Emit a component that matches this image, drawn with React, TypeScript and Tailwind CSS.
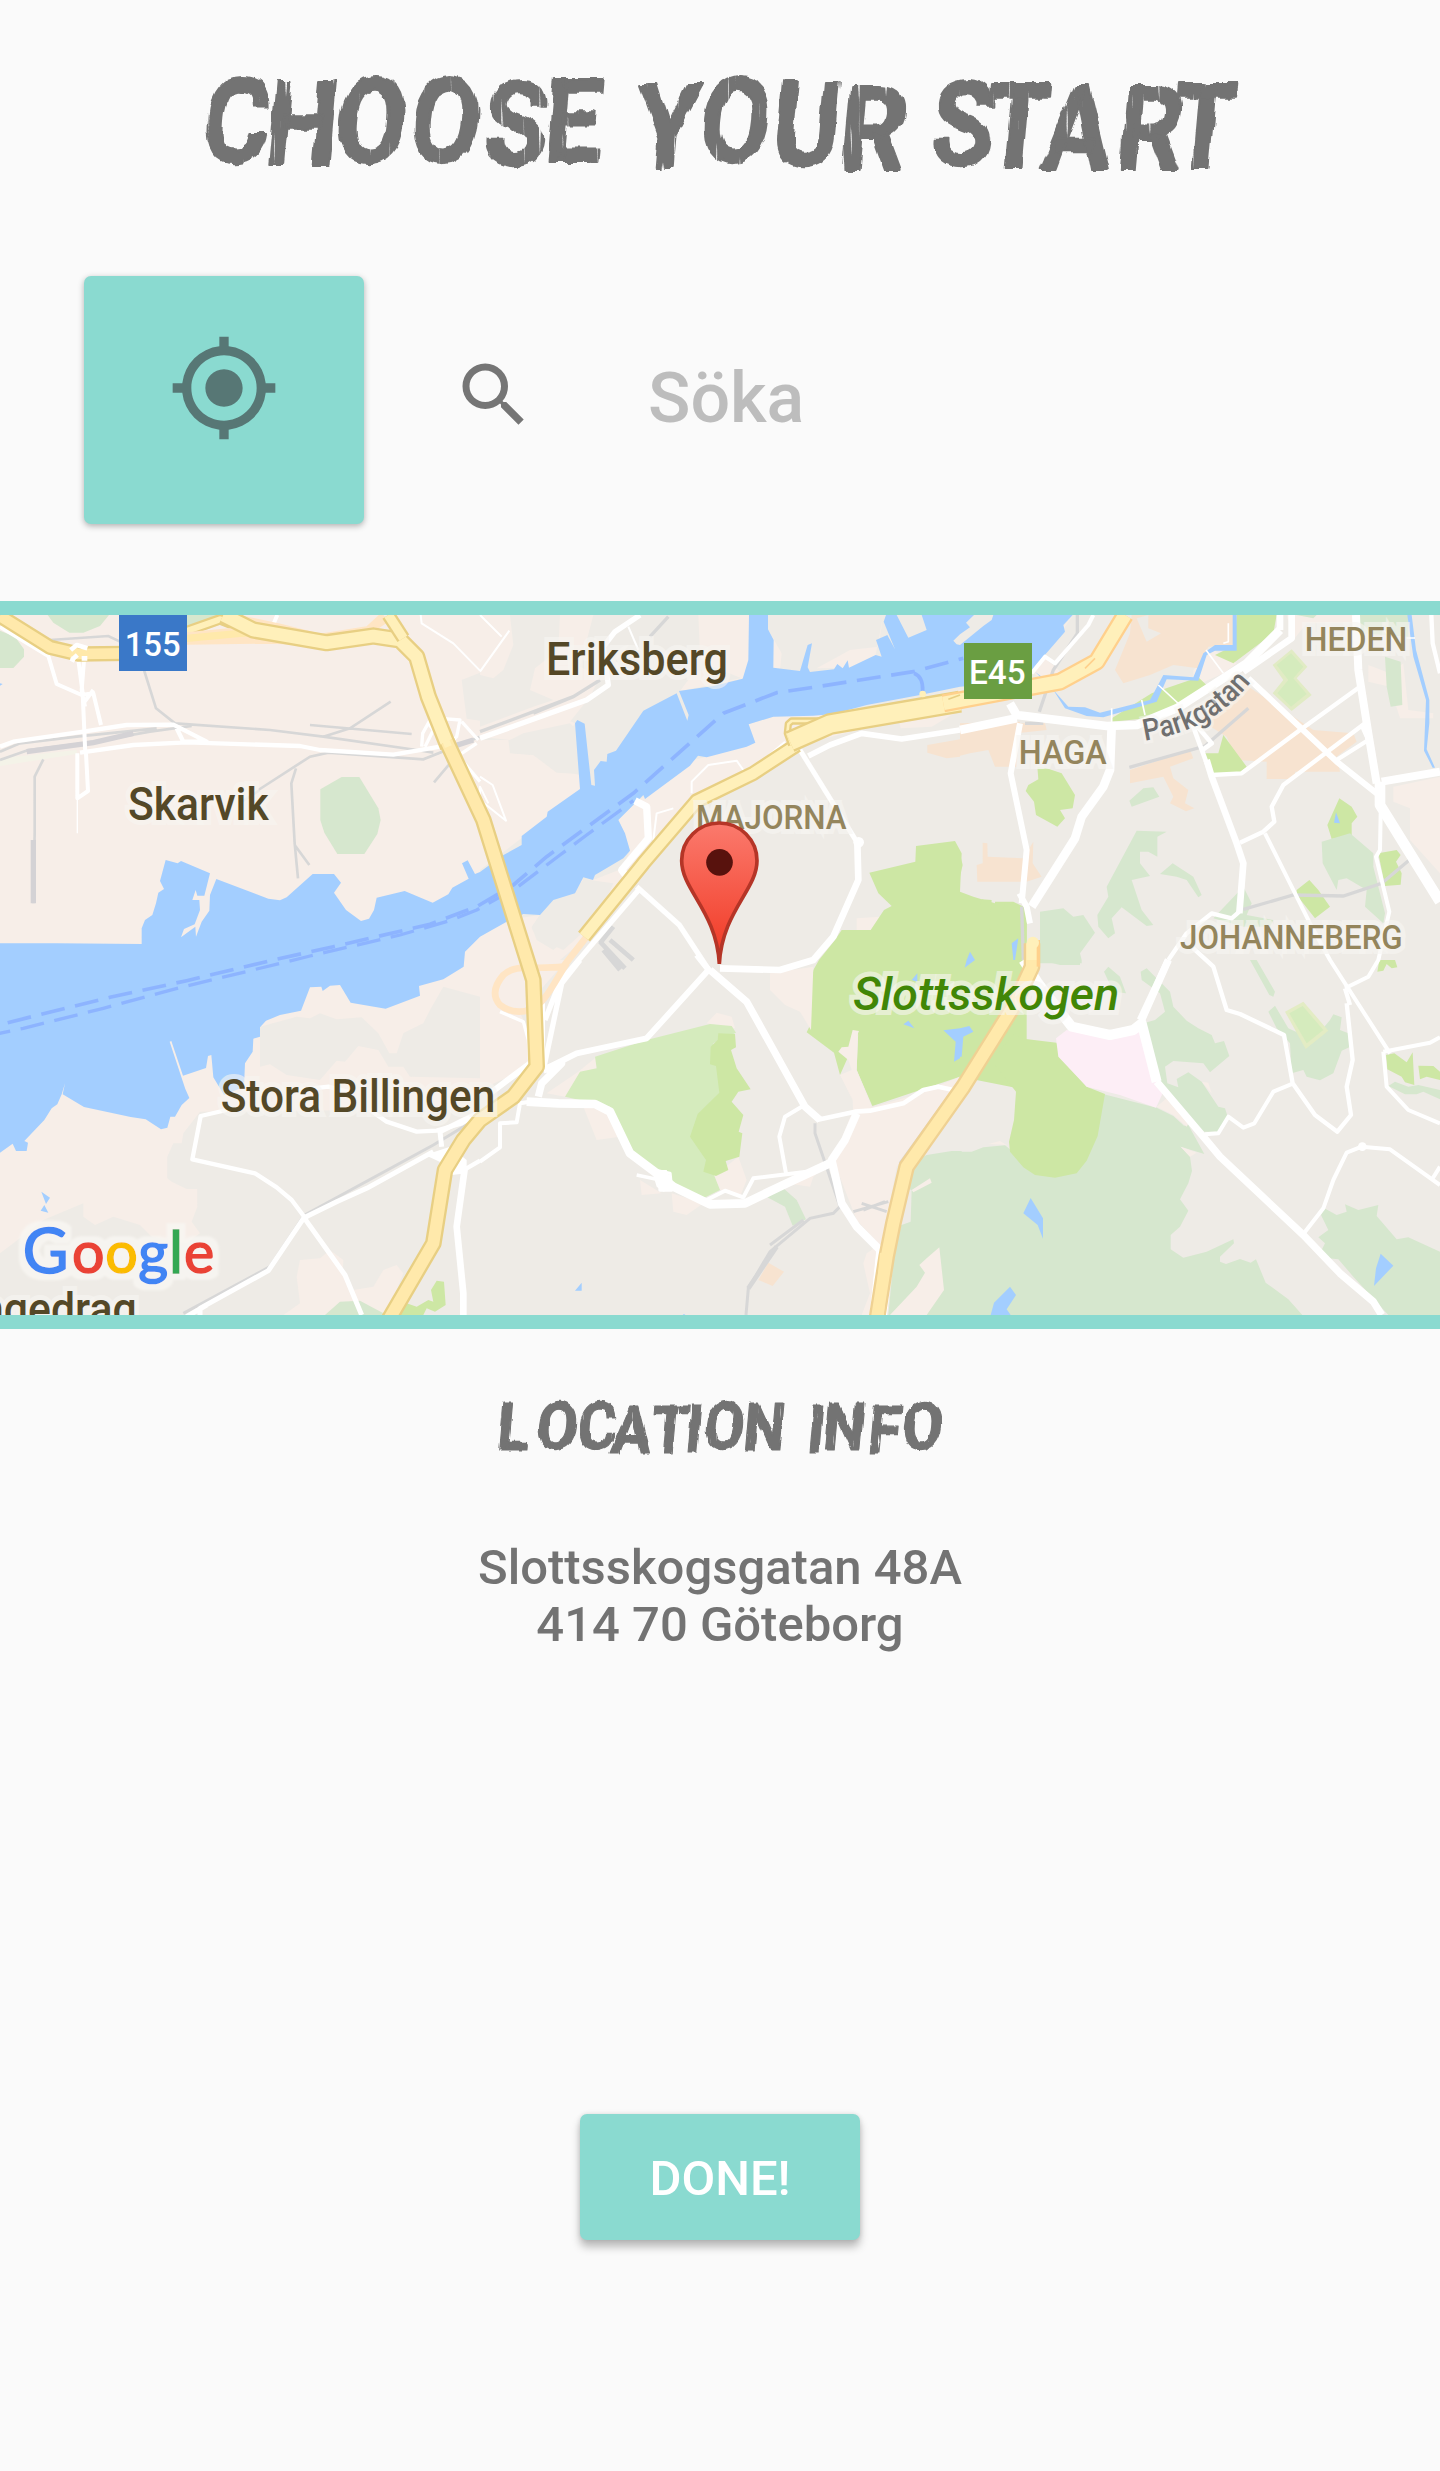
import type { ReactNode } from "react";

const GREY = "#737373";

/* ---------- Brush headings ---------- */

type BrushProps = {
  text: string;
  xs: number[];
  ys: number[];
  width: number;
  height: number;
  baseline: number;
  size: number;
  squeeze: number;
  filter: string;
};

function BrushText({ text, xs, ys, width, height, baseline, size, squeeze, filter }: BrushProps) {
  return (
    <svg width={width} height={height} viewBox={`0 0 ${width} ${height}`} className="block overflow-visible">
      <g filter={`url(#${filter})`}>
        <g transform={`translate(0 ${baseline}) skewX(-5) scale(${squeeze} 1)`}>
          <text
            x={xs.map((x) => (x / squeeze).toFixed(1)).join(" ")}
            y={ys.join(" ")}
            fontSize={size}
            fontWeight={700}
            fill={GREY}
            stroke={GREY}
            strokeWidth={size * 0.018}
            strokeLinejoin="round"
            className="font-['Roboto',sans-serif]"
          >
            {text}
          </text>
        </g>
      </g>
    </svg>
  );
}

function BrushFilters() {
  return (
    <svg width="0" height="0" className="absolute">
      <defs>
        <filter id="brush-lg" x="-5%" y="-20%" width="110%" height="140%">
          <feTurbulence type="fractalNoise" baseFrequency="0.09 0.03" numOctaves="2" seed="4" result="n" />
          <feDisplacementMap in="SourceGraphic" in2="n" scale="8" xChannelSelector="G" yChannelSelector="R" result="d" />
          <feTurbulence type="fractalNoise" baseFrequency="0.26 0.02" numOctaves="1" seed="9" result="s" />
          <feColorMatrix in="s" type="matrix" values="0 0 0 0 0  0 0 0 0 0  0 0 0 0 0  14 0 0 0 -9.7" result="cut" />
          <feComposite in="d" in2="cut" operator="out" />
        </filter>
        <filter id="brush-sm" x="-5%" y="-20%" width="110%" height="140%">
          <feTurbulence type="fractalNoise" baseFrequency="0.16 0.05" numOctaves="2" seed="6" result="n" />
          <feDisplacementMap in="SourceGraphic" in2="n" scale="4.500" xChannelSelector="G" yChannelSelector="R" result="d" />
          <feTurbulence type="fractalNoise" baseFrequency="0.45 0.04" numOctaves="1" seed="3" result="s" />
          <feColorMatrix in="s" type="matrix" values="0 0 0 0 0  0 0 0 0 0  0 0 0 0 0  12 0 0 0 -8.6" result="cut" />
          <feComposite in="d" in2="cut" operator="out" />
        </filter>
      </defs>
    </svg>
  );
}

/* ---------- Map ---------- */

const LAND = "#eeebe6";
const PEACH = "#f7eee8";
const WATER = "#a3ceff";
const PARK = "#cde7a4";
const PARK2 = "#d5ebbd";
const WOOD = "#d6e7ce";
const SAND = "#f7e3d0";
const RAIL = "#d7d7d7";
const CASE = "#e8cf83";

const A = ({ d, c }: { d: string; c: string }) => <path d={d} fill={c} />;
const R = ({ d, w, c = "#fff" }: { d: string; w: number; c?: string }) => (
  <path d={d} fill="none" stroke={c} strokeWidth={w} strokeLinejoin="round" />
);
const Hwy = ({ d, w, c = "#ffe9ab", k = CASE }: { d: string; w: number; c?: string; k?: string }) => (
  <>
    <R d={d} w={w} c={k} />
    <R d={d} w={w - 14} c={c} />
  </>
);
const Tile = ({ x, y, children }: { x: number; y: number; children: ReactNode }) => (
  <g transform={`translate(${x} ${y})`}>{children}</g>
);

type LabelProps = { x: number; y: number; w: number; s: number; c: string; t: string; italic?: boolean };
function Label({ x, y, w, s, c, t, italic }: LabelProps) {
  return (
    <text
      x={x}
      y={y}
      textLength={w}
      lengthAdjust="spacingAndGlyphs"
      fontSize={s}
      fontWeight={500}
      fontStyle={italic ? "italic" : undefined}
      fill={c}
      stroke="#f8f6f2"
      strokeOpacity={0.6}
      strokeWidth={30}
      paintOrder="stroke"
      className="font-['Roboto',sans-serif]"
    >
      {t}
    </text>
  );
}

function Areas() {
  return (
    <>
      {/* west side */}
      <A c={PEACH} d="M0 75H1440V1220L1330 1190 1290 1260 1270 1300 1210 1330 1190 1390 1168 1390 1135 1330 1085 1282 1010 1288 960 1270 930 1285 890 1280 780 1310 780 1430 810 1423 860 1455 960 1470 1010 1412 1035 1415 1075 1368 1135 1380 1165 1430 1210 1430 1230 1460 1440 1465V1560L1300 1560 1100 1560 600 1565 550 1630 545 1660 520 1660 502 1700 502 1765 515 1775 560 1797H592V1850L575 1895 600 1930 560 1960 455 1940 420 1905 340 1880 285 1905 250 1880V1840L130 1890 40 1960 0 1990Z" />
      <Tile x={0} y={0}>
        <A c={WOOD} d="M143 75H327L300 108 250 128H208L160 98Z M0 122L45 140 72 178V200L40 234H0Z M560 75H690L640 105 560 130Z" />
        <A c={WOOD} d="M1025 561H1078L1135 655 1142 690 1132 732 1093 792H1012L973 728 961 690V598Z" />
        <A c="#f4f3e8" d="M0 505L230 480V492L0 528Z" />
        <A c={WATER} d="M0 280L8 282 0 287Z" />
        <A c={LAND} d="M1385 270L1440 248V392L1400 386 1390 310Z" />
      </Tile>
      <Tile x={1440} y={0}>
        <A c={PEACH} d="M0 75L90 75 100 165 70 240 40 265 0 255Z M240 75H340L300 230 360 260 330 320 250 420 120 440 90 450 0 440V410L160 350 220 330 150 300 165 235 235 180Z M655 75H807V260L700 280 660 190Z M600 303L788 266 700 230 640 250Z M0 450L85 450 90 490 160 495 230 540 300 555V600L130 740 0 840Z M285 400L245 460 180 400 240 380Z M864 118L905 190 900 240H880Z M1107 233L1187 195 1210 75 1195 170 1110 180 1010 235Z" />
        <A c={LAND} d="M90 450L130 430 270 400 290 420 300 552 230 548 160 495 100 490Z" />
        <A c={PEACH} d="M805 403L880 380 1060 372 1300 330 1440 300V340L940 470 790 560 640 640 530 740 420 870 310 1050 240 1110H0V1040L80 990 180 975 155 1010 170 1050 220 1080 360 960 300 870 345 868 430 835 450 780 415 685 490 620 640 510 680 500 826 458Z" />
        <A c={LAND} d="M180 975L225 930 290 910 310 867 345 872 400 880 350 990 250 1080 180 1050 155 1015Z" />
        <A c={PEACH} d="M1255 385L1440 360 1355 410 1262 415Z M1130 985L1200 980 1235 948 1170 1035 1130 1020Z" />
        <A c={SAND} d="M1342 465L1440 448V500L1400 505 1342 488Z" />
        <A c={PARK} d="M1168 848L1306 815 1308 768 1425 753 1445 790 1440 905 1480 920 1545 940V935L1600 935 1640 955V1500L1440 1460 1177 1548 1130 1440 1135 1320 1138 1325 1080 1455 1062 1388 980 1327 993 1300 985 1240 1000 1140 1017 1110 1065 1050 1085 1020H1172L1212 960 1235 948 1195 910Z" />
        <A c={PEACH} d="M1130 1440L1134 1330 1137 1323 1118 1320 1105 1370 1085 1372 1075 1385 1105 1410 1115 1440 1080 1455 1118 1530 1120 1580 1180 1560Z" />
        <A c={WATER} d="M1390 1321L1440 1315 1470 1308 1480 1325 1450 1342 1445 1402 1422 1415 1427 1355Z M1270 1303L1285 1292 1303 1315Z M1295 1170L1312 1150V1175Z" />
        <A c={PEACH} d="M870 1150L1000 1130 993 1320 960 1265 915 1245 870 1200Z" />
      </Tile>
      <Tile x={2880} y={0}>
        <A c={PEACH} d="M340 75L310 110 220 250 290 300 330 270 250 200Z M700 240L760 180 830 220 790 250 700 290Z M980 75H1180V100L1040 100 1000 150Z M1225 225L1290 250 1330 220 1345 360 1420 370V385L1320 385 1290 290 1225 275Z M1300 590L1440 560V850L1350 750V655L1300 635Z" />
        <A c={SAND} d="M515 75H820V165L745 170 715 235 640 225 570 255 490 280 465 240 510 130Z M0 400L180 395 170 530H105L85 480 30 490 0 497Z M850 280L1060 420 1180 430 1190 455 1130 500 1140 545 1005 545V567H920V515L830 510 800 440 720 390Z M510 540L690 480 700 505 630 530 640 565 685 600 675 640 703 655 678 664 630 640 640 620 610 560 510 580Z M68 758L82 760 83 800 190 805 220 755 218 820 245 860 200 875H52L50 825 68 820Z M165 400L255 400 260 420 170 430Z" />
        <A c={LAND} d="M530 85L565 75 565 115 603 130 560 155Z" />
        <A c={PARK} d="M830 75H950L940 130 820 220 765 195 825 165Z M575 310L715 262 745 290 660 340 560 385 455 395 455 385Z M735 490L775 490 790 435 860 530 840 548 750 550Z M232 530L260 535 305 550 345 615 338 655 300 660 315 685 292 710 228 675 222 635 197 603 205 585 235 568Z M1138 625L1175 650 1192 680 1175 700V735L1115 747 1102 705Z M1255 790L1310 780 1322 795 1308 815 1325 850 1322 884 1275 888Z M1048 870L1075 900 1110 950 1065 985 1010 915V900Z M0 790L8 825 0 860Z" />
        <A c="#e1ebc4" d="M995 178L1042 230 1010 265 1055 315 995 363 938 310 970 270 938 225Z" />
        <A c={PARK2} d="M993 190L1030 230 1000 265 1040 312 993 350 952 310 985 270 950 225Z" />
        <A c={WOOD} d="M1275 200L1322 215 1327 345 1292 350 1280 290Z M1010 75H1070L1060 85Z M1200 75H1345V140L1200 130Z M508 632L550 595 580 592 598 620 515 650Z M530 722L620 725 592 740V800L565 785 540 785V820L570 858 515 870 545 960 580 1005 560 1008 485 952 455 985 465 1030 445 1045 415 1010 412 975 445 920 440 890Z M600 852L638 820 700 860 725 915 715 922 680 870 650 860Z M1085 755L1120 745 1170 730 1240 790 1240 830 1275 970 1270 1000 1215 950 1220 900 1160 865 1135 870 1130 900 1088 820Z M240 965L310 955 340 980 370 975 405 1028 360 1090 365 1110V1120H240Z M850 890L875 940 860 975 940 990 930 1010 850 1010 760 985Z" />
        <A c={PARK} d="M0 915L15 915V965L55 975 65 928 95 930 88 1020 110 1010 135 938 185 950 200 1000V1110L170 1290 60 1430 0 1470Z" />
        <A c={WATER} d="M225 245L245 260 325 350 375 352 420 368 570 330 610 255 700 262 730 190 765 165 818 165V75H830V182H765L740 195 715 272 620 268 590 335 430 382 380 378 315 355 280 300Z M1342 75L1355 75 1368 180 1408 330V400L1400 478 1425 533H1418L1392 482 1398 330 1360 200Z M1128 667L1140 700 1122 698Z M155 1060L175 1045 165 1110H160Z M20 1110L30 1085 45 1110 14 1133Z" />
      </Tile>
      <Tile x={0} y={1110}>
        <A c={WATER} d="M124 695L150 713 138 732Z M133 735L145 758 122 752Z" />
        <A c={PEACH} d="M990 870L1030 900 1028 940 1060 990 1120 980 1150 930 1190 915 1210 940 1160 1065H850L900 1030 890 950 900 900 960 895Z" />
        <A c={WOOD} d="M975 1065L1020 1025 1080 1022 1160 1065Z" />
        <A c={PARK} d="M1190 1065L1220 1030 1250 1040 1285 1020 1300 1025 1293 990 1310 962 1332 965 1337 1035 1305 1055 1280 1045 1270 1065Z" />
      </Tile>
      <Tile x={1440} y={1110}>
        <A c={PEACH} d="M0 0H260L120 160 200 310 150 320 20 380 0 380Z M295 335L350 290 350 325 255 410 200 400Z M310 440L380 450 420 530 350 540Z M680 190L710 158 755 170 765 205Z M480 660L545 700 485 705Z M575 700L670 730 620 765 580 755Z M700 650L775 590 800 660 780 710 720 690Z M920 670L1060 600 1000 650 990 680Z M1115 460L1320 400 1440 350V380L1250 620 1205 860 1130 780 1060 600Z M1160 880L1190 860V1065H1145L1170 1000 1150 910Z" />
        <A c={PARK2} d="M345 290L500 240 690 192 755 198 768 218 700 250 730 420 740 600 700 640 720 690 670 715 580 670 440 560 390 440 255 410 300 335 350 325Z" />
        <A c={PARK} d="M715 220L765 222 768 262 753 270 770 325 812 388 775 395 755 425 790 465 776 515 787 520 778 590 737 603 745 630 708 648 670 635 678 600 630 530 653 462 718 398 708 318 690 313 692 260 713 240Z" />
        <A c={WOOD} d="M862 712L910 685 950 720 978 778 938 797 915 740Z" />
        <A c={SAND} d="M865 908L912 935 878 978 835 960Z" />
        <A c={WATER} d="M305 968V992H285Z M612 1062L616 1065H608Z" />
        <A c={WOOD} d="M1275 650L1310 600 1340 585 1415 573H1445V1065H1225L1250 800 1292 785 1295 690 1275 685Z" />
      </Tile>
      <Tile x={2880} y={1110}>
        <A c={WOOD} d="M-10 575L35 575 70 562 135 556 165 580 300 500 420 400 590 443 640 468 672 497 685 495 733 582 662 560 690 590 696 633 685 670 660 718 685 752 660 800 632 825V868L670 893 740 875 820 838 822 850 780 890V905L798 912 840 897 872 908 888 898 917 968 985 1018 1027 1065H-10Z" />
        <A c={PEACH} d="M-100 895L-62 862 -48 990 -100 1065H-210L-130 980 -105 938 -122 915Z M-145 690L-90 655 -85 668 -140 697Z M662 560L710 578 690 590Z M660 380L590 440 640 465 680 500 690 480Z M725 365L745 368 755 400Z M85 552L120 543 140 555Z" />
        <A c={PARK} d="M105 288L165 220 178 235 290 248 300 290 380 380 435 402 413 528 380 602 350 640 285 653 225 645 190 622 150 575 147 545 162 480 168 395 105 315Z" />
        <A c="#fdeef6" d="M288 235L320 210 440 230 540 200 590 360 608 400 588 443 480 405 380 380 295 290Z" />
        <A c={WOOD} d="M550 190L585 180 615 155 600 100 545 60 542 35 560 25 630 95 640 140 680 182 715 205 755 225 765 250 792 243 808 288 750 337 730 310 640 303 615 320 622 370 655 382 650 357 685 337 725 365 775 440 795 445 803 470 775 515H730L600 380Z M432 35L445 20 480 50 498 100 460 95Z M240 0H360V15H300Z M870 0H890L945 95 940 110 928 105Z M925 155L945 137 985 205 1060 240 1110 180 1120 163 1145 172 1140 210 1165 220 1168 262 1145 272 1120 340 1080 361 1040 350 1030 330 995 340 990 250 950 205Z M1285 378L1305 365 1345 380 1375 375 1440 390V418L1390 395 1370 403H1335Z M1093 745L1130 765 1160 755 1155 733 1195 750 1255 735 1250 768 1310 838 1345 832 1440 875V1065H1285L1180 950 1135 898 1105 895 1085 870 1095 850 1075 832 1105 810 1083 765Z" />
        <A c={PARK} d="M1278 285L1303 280 1340 307 1358 277 1363 375 1335 367 1325 350 1282 328Z M1375 317L1420 318 1440 335V360L1400 350 1380 358Z M1258 0H1305L1312 22 1295 25 1280 12 1270 32 1252 35Z" />
        <A c="#e3ecc4" d="M975 155L1030 125 1105 212 1037 267Z" />
        <A c={PARK2} d="M988 160L1028 138 1090 210 1040 250Z" />
        <A c={WATER} d="M212 714L249 775V836L233 795 190 760Z M150 980L168 1005 140 1048 152 1065H92L102 1028Z M1262 881L1300 917 1242 978 1248 925Z M0 205L28 198 40 215 10 230 5 290H0Z" />
      </Tile>
    </>
  );
}

const WATERWAY =
  "M0 1060H168L425 1062V1015L435 990 457 975 468 940 475 908 492 897 480 873 497 810 533 820 543 813 630 850 613 917H592L587 900 577 930H598L600 960 584 1003 552 1017 543 1042 586 1010 588 1040 605 995 628 962 630 915 649 867 805 926 840 931 860 922 938 852H1002L1023 878 1002 908 1038 960 1083 993 1107 986 1122 960 1130 923 1214 903 1298 938 1345 913 1357 893 1406 866 1386 820 1403 811 1425 852 1440 846 1505 798 1565 765V738L1640 680 1643 665 1740 597 1725 400 1732 390 1754 401 1774 585 1785 587 1782 540 1802 513 1820 515 1822 492 1848 482 1930 362 2030 310 2062 392 2066 375 2037 303 2140 288 2228 266 2245 210 2247 75H2304V118L2321 150 2320 233 2400 243 2423 165 2436 160 2423 232 2430 246 2502 238 2512 222 2528 235 2543 211 2547 233 2627 195 2645 200 2628 150 2662 135 2685 178 2651 95 2658 75H2690L2725 143 2780 120 2765 75H2922L2898 98 2910 112 2880 133 2860 152 2870 163 2880 165 2950 108 2975 90 2980 75H3218L3190 105 3195 125 3100 235 3090 270 2880 290 2760 315 2600 345 2500 372 2440 377 2320 380 2246 403 2266 458 2240 470 2120 502 2094 497 2070 527 1935 627 1930 615 1855 690 1875 730 1890 782 1870 805 1785 855 1779 870 1750 862 1725 910 1660 930 1620 975 1570 972 1520 995 1440 1040 1395 1085 1391 1130 1330 1168 1257 1188 1260 1217 1157 1256 1052 1238 1020 1185 990 1187 968 1203 964 1190 930 1192 903 1262 840 1275 798 1292 780 1312V1340L760 1346 758 1385 735 1420 732 1490 672 1515 640 1462 634 1395 624 1398 618 1434 549 1457 514 1353 509 1355 556 1497 568 1524 545 1545 525 1580H511L502 1613 483 1618 437 1588 392 1581 252 1551 188 1513 195 1480 185 1513 172 1543 155 1555 133 1590 73 1653 84 1658 80 1683H48L38 1661 0 1688Z";

function Ferries() {
  const p = { fill: "none", stroke: "#8db4ff", strokeLinejoin: "round" as const };
  return (
    <>
      <path {...p} strokeWidth={11} strokeDasharray="72 32" d="M23 1298L330 1222 560 1172 820 1110 1000 1070 1290 1003 1430 950 1540 885 1640 800 1900 610 2170 370 2330 308 2440 292 2740 245 2890 205" />
      <path {...p} strokeWidth={10} strokeDasharray="72 32" d="M-40 1338L70 1315 310 1255 520 1198 750 1142 930 1098 1200 1035 1350 992 1430 960 1550 893 1680 795 1760 735 1900 632" />
      <path {...p} strokeWidth={11} d="M2742 250Q2770 260 2768 305" />
    </>
  );
}

function Rails() {
  return (
    <g fill="none" stroke={RAIL} strokeWidth={8}>
      <path d="M150 150L325 138 360 155 M432 240L468 355 525 400 810 420 970 440 1250 480 1300 488 M0 510L85 480 250 460 450 425 575 408 M0 485L60 460 230 440 470 415 M130 508L104 560V730L100 940 M775 600L930 500 985 488 1270 508 1440 440 M725 635L780 600 M888 535L874 580 884 760 894 865 M884 765L928 825 M970 440L1050 415 1172 335 M930 405L1235 432 M1302 577L1350 520" />
      <path strokeWidth={16} stroke="#d4d2d5" d="M80 485L280 458 400 430 M100 750V940 M1340 475L1420 450" />
      <path strokeWidth={10} d="M1440 425L1720 320 1800 270 M1600 370L1720 320 M1950 140L2005 80 M3232 75V130L3160 240 3118 365 M3075 400H3130 M3388 532L3615 468 3745 355 M3730 958L3880 915 4030 918 4145 880 4228 810 M3985 490L4015 520 M3065 950L3070 1110" />
      <path strokeWidth={9} d="M914 1875L1300 1665 1440 1580 M800 2045L910 1880 M550 2170L810 2030 M2445 1600V1630L2520 1850 2500 1870 2430 1885 2310 1985 2245 2095 2238 2175 M2310 1965L2410 1890 M2560 1865L2665 1835 M2585 1840L2660 1865 M2590 1860L2655 1835 M2860 1500L2700 1720" />
      <path strokeWidth={14} d="M1800 1055L1875 1135 M1830 1050L1900 1110 M1810 1080L1860 1140 M1800 1060L1840 1010 M2245 2095L2330 1970" />
    </g>
  );
}

function Streets() {
  return (
    <>
      <Tile x={0} y={0}>
        <R w={12} d="M0 110L145 198 170 282 245 315 280 310 303 405 M235 210L248 310 256 490 M252 210L245 300 255 350 M280 300L250 340" />
        <R w={12} d="M232 490V625L264 603 258 490" />
        <R w={4} d="M232 625V730" />
        <R w={13} d="M0 470L40 455 250 425 380 405 520 404 620 455 550 455 530 415 M240 488L400 465 560 457 900 468 960 480 1180 494 1320 470" />
        <R w={10} d="M1272 300L1290 390 1268 430 1265 470 M1285 400L1300 420 1275 470 M1320 385L1380 390 1370 440 1350 460 M1385 395L1435 450 M1430 460L1385 490 M1385 510L1440 575" />
        <R w={6} d="M1262 75L1265 100 1360 160 1440 242" />
        <R w={12} d="M832 75L815 115 M795 140V160" />
      </Tile>
      <Tile x={1440} y={0}>
        <R w={6} d="M0 75L65 140 M88 122L0 245 M0 560L38 585 78 692 0 630 0 590 25 640" />
        <R w={16} d="M0 445L320 330 385 285 370 170 405 125 480 75" />
        <R w={6} d="M445 110L475 180 M635 610V575L685 525 770 512 790 540 M520 750L530 670 580 655" />
        <R w={22} d="M465 632L500 650 505 745 425 840 440 860" />
        <R w={15} d="M960 480L1130 755" />
        <R w={20} d="M1132 755L1135 870 1060 1040 1000 1110 900 1140 720 1135" />
        <R w={17} d="M985 498L1050 465 1145 430 1265 447 1440 420" />
        <R w={16} d="M470 890L598 1005 690 1145 M480 895L240 1175 195 1290 M300 1110L245 1180 190 1440" />
        <R w={6} d="M790 560L915 455" />
        <circle cx={1136} cy={757} r={16} fill="#fff" />
      </Tile>
      <Tile x={2880} y={0}>
        <R w={12} d="M400 75L385 105 285 220 255 200 215 250" />
        <R w={26} d="M0 420L170 385 M150 340L170 375 440 408 530 405 650 355 860 220 960 120" />
        <R w={20} d="M960 75V120 M995 75V145L850 245" />
        <R w={18} d="M180 400L152 550 200 780 185 940 M178 910L200 950 210 1000" />
        <R w={26} d="M455 410L450 540 430 590 365 680 345 745 215 950" />
        <R w={14} d="M685 370L755 560 M700 395L755 460 730 478" />
        <R w={20} d="M740 510L755 560 830 760 850 820 838 970" />
        <R w={18} d="M865 265L1130 515 1250 610" />
        <R w={13} d="M755 555L845 550 1020 420 1200 290 M1215 400L970 585 935 650 943 695 910 725 840 758 M1130 510L1225 450 1205 405" />
        <R w={24} d="M1188 75L1195 240 1225 430 1250 580 M1265 575L1440 545" />
        <R w={32} d="M1260 575V645L1440 935" />
        <R w={12} d="M1262 670L1260 780 1248 800 1288 965 1255 1110 1225 1160 1155 1195 M915 730L1050 1000 1110 1110 1290 1390" />
        <R w={13} d="M1414 75L1418 160 1440 250 M838 965L815 985 755 970 680 1030 625 1110" />
        <R w={5} d="M738 180L790 250 M805 100V155L790 160 M595 285L660 345 M545 330L555 375 M455 355V400 M1270 120L1300 150 M1340 144H1365" />
        <R w={13} d="M700 1075L760 1130 800 1260 840 1272 972 1335 998 1480 1065 1575 1132 1625 1173 1575 1160 1490 1178 1410 1160 1240 M1155 1195L1170 1245" />
        <R w={20} d="M625 1110L540 1290" />
      </Tile>
      <Tile x={0} y={1110}>
        <R w={13} d="M1440 455L1385 490 1310 512 1250 515 1160 485 1110 450 M1060 400L985 380 900 390 M680 450L602 468 577 598 765 640 830 682 875 720 920 780" />
        <R w={15} d="M1440 455L1320 515 1325 560 M1300 575L1100 685 1010 725 912 773 805 932 600 1045V1070 M560 1070L620 1035 M912 773L1035 945 1085 1065" />
        <A c="#fff" d="M1275 585L1350 560 1400 600 1400 640 1355 645 1340 615Z" />
        <R w={20} d="M1395 620L1370 800 1390 1000V1065" />
        <R w={13} d="M1400 625L1440 602" />
      </Tile>
      <Tile x={1440} y={1110}>
        <R w={10} d="M60 155L130 185 145 240 150 320 M190 130V330" />
        <R w={18} d="M650 -15L690 35 M190 330L290 280 500 235 690 25 M150 310L30 400" />
        <R w={22} d="M690 30L800 125 975 440 1020 480 M190 330L245 310 185 370 175 410" />
        <R w={26} d="M140 425L235 430 345 432 390 455 450 580 530 640 580 680 690 733 795 730 920 670 1060 605" />
        <R w={12} d="M0 605L60 562V490L110 487 120 430 150 425 M680 720L735 692 790 712 820 655 980 635 M918 640L898 530 915 470 965 440" />
        <R w={14} d="M1010 480L1125 455 1170 452 1270 430 1330 390 1375 380 1420 390" />
        <R w={24} d="M1130 460L1095 540 1055 600 1085 730 1130 800 1200 870V900" />
        <R w={12} d="M1195 870L1175 1065 M1235 890L1215 1065" />
        <R w={10} d="M470 645L540 660 540 690 575 690 570 640 520 630" />
        <A c="#fff" d="M515 630H560L585 685 550 695 530 680Z M1190 870H1205L1190 1065H1170Z" />
      </Tile>
      <Tile x={2880} y={1110}>
        <R w={30} d="M190 0L235 70 335 200 450 225 520 210 545 190 590 365" />
        <R w={22} d="M625 0L545 180 M590 365L730 530 780 590 1030 825 1140 940 1240 1025 1265 1065" />
        <R w={12} d="M735 523L775 520 805 470 850 503 883 490 940 395 1000 370 M1030 822L1090 745 1120 660 1160 578 1205 560 1290 568 1440 675 M1415 660L1440 620 M1270 275L1280 380 1345 450 1440 490 M1270 275L1410 248 1440 232" />
        <circle cx={1207} cy={560} r={13} fill="#fff" />
      </Tile>
    </>
  );
}

function Highways() {
  const pale = "#fff0ba";
  return (
    <>
      <R w={18} c="#ffe5c4" d="M560 155L820 152 960 160 1090 130 1150 75 M560 130L700 80 840 110 960 140 1120 115 1180 75" />
      <R w={20} c="#ffe5c4" d="M1760 1040L1690 1130C1600 1140 1545 1120 1510 1155C1480 1190 1478 1220 1500 1245Q1540 1275 1590 1260C1640 1235 1660 1180 1700 1120" />
      <Hwy w={46} d="M0 78L150 172 235 192 380 190" />
      <Hwy w={32} d="M555 125L660 88 760 128" c={pale} />
      <Hwy w={36} d="M560 145L720 130 840 125" k="#ffe5c4" />
      <Hwy w={52} c={pale} d="M670 75L760 120 980 158 1120 138 1200 150 1250 200 1285 320 1345 470" />
      <Hwy w={42} c={pale} d="M1165 75L1210 145" />
      <Hwy w={50} d="M1340 455L1450 690 1600 1170 1610 1430 1540 1520 1440 1590 1390 1650 1335 1740 1300 1960 1160 2200" />
      <R w={22} c={pale} d="M1285 320L1345 470" />
      <R w={14} d="M232 195L215 210M212 180L230 165 262 175M212 205L225 212M245 205L262 205" />
      <Hwy w={46} c={pale} d="M1752 1040L1930 820 2090 633 2260 550 2390 465" />
      <Hwy w={22} c={pale} d="M2375 465L2362 430 2365 402 2375 393 2460 393" />
      <Hwy w={66} c={pale} d="M2370 455L2490 402 2880 335" />
      <Hwy w={54} k="#ffd08c" c={pale} d="M2830 340L3180 275 3290 215 3375 75" />
      <R w={5} c="#ffd08c" d="M3255 235L3285 205" />
      <R w={5} c={CASE} d="M2845 328L2880 315" />
      <Hwy w={50} k="#efd193" d="M3096 1060V1130L3040 1250 2890 1490 2720 1730 2680 1900 2660 2000 2630 2190" />
      <R w={34} c={pale} d="M3097 1055V1110" />
      <R w={30} c="#ffe9ab" d="M2655 1990L2635 2190" />
      <R w={10} c="#ffd08c" d="M3115 1050V1130" />
      <circle cx={3099} cy={1058} r={18} fill={pale} />
      <circle cx={2768} cy={312} r={10} fill={pale} />
    </>
  );
}

function MapView() {
  return (
    <svg viewBox="0 75 4320 2100" width={1440} height={700} className="block">
      <defs>
        <linearGradient id="pin" x1="0" y1="0" x2="0" y2="1">
          <stop offset="0" stopColor="#fb7a6d" />
          <stop offset="0.85" stopColor="#f2412d" />
        </linearGradient>
        <path id="parkgatan" d="M3434 452C3555 432 3655 397 3757 271" />
        <filter id="halo" x="-10%" y="-20%" width="120%" height="140%">
          <feMorphology in="SourceAlpha" operator="dilate" radius="18" result="m" />
          <feGaussianBlur in="m" stdDeviation="3" result="b" />
          <feFlood floodColor="#f8f6f2" floodOpacity="0.85" />
          <feComposite in2="b" operator="in" result="h" />
          <feMerge>
            <feMergeNode in="h" />
            <feMergeNode in="SourceGraphic" />
          </feMerge>
        </filter>
      </defs>
      <rect x={0} y={75} width={4320} height={2100} fill={LAND} />
      <Areas />
      <path d={WATERWAY} fill={WATER} />
      <Ferries />
      <Rails />
      <Streets />
      <Highways />

      <rect x={357} y={75} width={204} height={168} fill="#3a78c8" />
      <rect x={2892} y={159} width={204} height={168} fill="#6a9e42" />
      <g fill="#fff" fontSize={101} fontWeight={500} className="font-['Roboto',sans-serif]">
        <text x={374} y={198} textLength={168} lengthAdjust="spacingAndGlyphs">155</text>
        <text x={2907} y={282} textLength={170} lengthAdjust="spacingAndGlyphs">E45</text>
      </g>

      <Label x={384} y={691} w={422} s={137} c="#544827" t="Skarvik" />
      <Label x={1638} y={254} w={546} s={137} c="#544827" t="Eriksberg" />
      <Label x={662} y={1566} w={824} s={137} c="#544827" t="Stora Billingen" />
      <Label x={-60} y={2204} w={470} s={137} c="#544827" t="ngedrag" />
      <Label x={2088} y={717} w={452} s={102} c="#94855c" t="MAJORNA" />
      <Label x={3914} y={184} w={308} s={102} c="#94855c" t="HEDEN" />
      <Label x={3056} y={522} w={264} s={102} c="#94855c" t="HAGA" />
      <Label x={3540} y={1077} w={668} s={102} c="#94855c" t="JOHANNEBERG" />
      <Label x={2560} y={1260} w={798} s={140} c="#418606" t="Slottsskogen" italic />
      <text fontSize={90} fontWeight={500} fill="#6f6f6f" stroke="#f8f6f2" strokeOpacity={0.5} strokeWidth={20} paintOrder="stroke" className="font-['Roboto',sans-serif]">
        <textPath href="#parkgatan" textLength={374} lengthAdjust="spacingAndGlyphs">Parkgatan</textPath>
      </text>

      <text x="68 216 316 415 508 552" y={2049} fontSize={172} fontWeight={400} strokeWidth={5} filter="url(#halo)" className="font-['Lato',sans-serif]">
        <tspan fill="#4285f4" stroke="#4285f4" fontSize={188}>G</tspan>
        <tspan fill="#ea4335" stroke="#ea4335">o</tspan>
        <tspan fill="#fbbc05" stroke="#fbbc05">o</tspan>
        <tspan fill="#4285f4" stroke="#4285f4">g</tspan>
        <tspan fill="#34a853" stroke="#34a853">l</tspan>
        <tspan fill="#ea4335" stroke="#ea4335">e</tspan>
      </text>

      <path d="M2158 1122C2150 965 2045 900 2045 812A113 113 0 0 1 2271 812C2271 900 2166 965 2158 1122Z" fill="url(#pin)" stroke="#b53527" strokeWidth={11} />
      <circle cx={2158.500} cy={817} r={40} fill="#58120d" />
    </svg>
  );
}

/* ---------- Screen ---------- */

export default function App() {
  return (
    <main className="flex h-[2471px] w-[1440px] flex-col items-center overflow-hidden bg-[#fafafa] font-['Roboto',sans-serif] font-medium text-[#737373]">
      <BrushFilters />
      <h1 className="h-[276px] w-full">
        <BrushText
          text="CHOOSE YOUR START"
          xs={[200, 263, 333, 407, 481, 541, 600, 633, 697, 770, 838, 900, 928, 983, 1040, 1115, 1170]}
          ys={[0, 3, 0, 0, 3, 0, 0, 6, 0, 3, 8, 0, 3, 6, 8, 8, 6]}
          width={1440}
          height={276}
          baseline={162}
          size={118}
          squeeze={0.87}
          filter="brush-lg"
        />
      </h1>

      <section className="flex h-[325px] w-full items-start pl-[84px]">
        <button className="flex h-[248px] w-[280px] justify-center rounded-[7px] bg-[#8adad0] pt-14 shadow-[0_2px_6px_rgba(0,0,0,0.3)]">
          <svg viewBox="0 0 24 24" width={112} height={112} fill="#577775">
            <path d="M12 8c-2.210 0-4 1.790-4 4s1.790 4 4 4 4-1.790 4-4-1.790-4-4-4zm8.940 3A8.994 8.994 0 0 0 13 3.060V1h-2v2.060A8.994 8.994 0 0 0 3.060 11H1v2h2.060A8.994 8.994 0 0 0 11 20.940V23h2v-2.060A8.994 8.994 0 0 0 20.940 13H23v-2h-2.060zM12 19c-3.870 0-7-3.130-7-7s3.130-7 7-7 7 3.130 7 7-3.130 7-7 7z" />
          </svg>
        </button>
        <svg viewBox="0 0 24 24" width={84} height={84} fill="#757575" className="mt-[77px] ml-[88px]">
          <path d="M15.500 14h-.79l-.28-.27A6.471 6.471 0 0 0 16 9.500 6.500 6.500 0 1 0 9.500 16c1.610 0 3.090-.59 4.230-1.570l.27.28v.79l5 4.990L20.490 19l-4.990-5zm-6 0C7.010 14 5 11.990 5 9.500S7.010 5 9.500 5 14 7.010 14 9.500 11.990 14 9.500 14z" />
        </svg>
        <div className="mt-[81px] ml-28 text-[70px] leading-[82px] text-[#bdbdbd]">Söka</div>
      </section>

      <section className="h-[728px] w-full border-y-[14px] border-[#8adad0]">
        <MapView />
      </section>

      <h2 className="h-[210px] w-full">
        <BrushText
          text="LOCATION INFO"
          xs={[496, 535, 576, 610, 650, 684, 702, 742, 788, 806, 822, 867, 900]}
          ys={[1, 0, 0, 4, 4, 3, 0, 1, 0, 3, 1, 4, 0]}
          width={1440}
          height={210}
          baseline={120}
          size={66}
          squeeze={0.9}
          filter="brush-sm"
        />
      </h2>

      <p className="text-center text-[49px] leading-[57px]">
        Slottsskogsgatan 48A
        <br />
        414 70 Göteborg
      </p>

      <button className="mt-[461px] h-[126px] w-[280px] rounded-[7px] bg-[#8adad0] pt-[3px] text-[49px] leading-[57px] text-white shadow-[0_7px_8px_rgba(0,0,0,0.25),0_0_5px_rgba(0,0,0,0.12)]">
        DONE!
      </button>
    </main>
  );
}
